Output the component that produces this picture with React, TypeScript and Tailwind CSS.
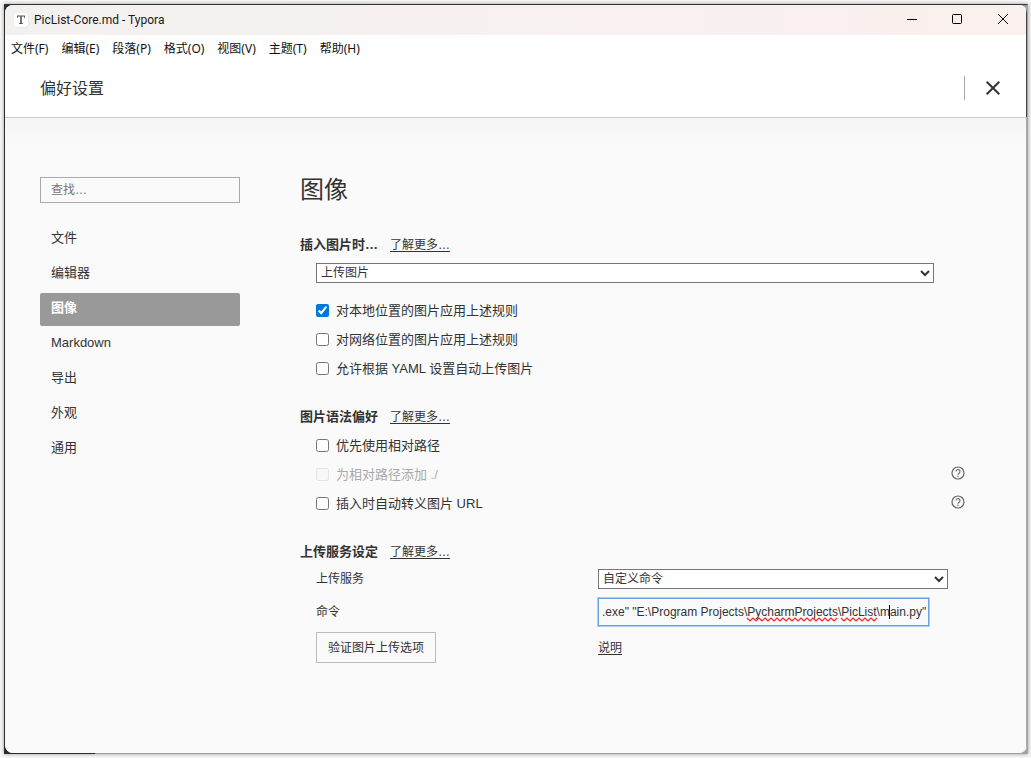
import { useState } from "react";
import type { ReactNode } from "react";

const menus = ["文件(F)", "编辑(E)", "段落(P)", "格式(O)", "视图(V)", "主题(T)", "帮助(H)"];
const categories = ["文件", "编辑器", "图像", "Markdown", "导出", "外观", "通用"];

function TitleBar() {
  return (
    <div className="flex h-[30px] items-center bg-linear-to-r from-[#f3f1f0] to-[#faf0ee] pl-2">
      <svg className="size-4" viewBox="0 0 16 16" aria-hidden="true">
        <rect x="1" y="1" width="14.500" height="14.500" rx="3" fill="#e4e2e1" />
        <rect x="1" y="1" width="14" height="14" rx="3" fill="#fff" />
        <path d="M4 3.500h8v2.500h-.6L10.900 4.500H8.800v6.500l1.200.3v.7H6v-.7l1.200-.3V4.500H5.100l-.5 1.500H4z" fill="#555" />
      </svg>
      <h1 className="ml-[5px] flex-1 font-[Roboto,'Noto_Sans_CJK_SC',sans-serif] text-xs text-[#1a1a1a]">
        PicList-Core.md - Typora
      </h1>
      <button type="button" aria-label="最小化" className="flex h-full w-[45px] items-center justify-center">
        <svg className="size-3" viewBox="0 0 12 12" stroke="#000" fill="none">
          <path d="M1 5.5h10" />
        </svg>
      </button>
      <button type="button" aria-label="最大化" className="flex h-full w-[46px] items-center justify-center">
        <svg className="size-3" viewBox="0 0 12 12" stroke="#000" fill="none">
          <rect x="1.5" y="0.5" width="9" height="9" rx="1" />
        </svg>
      </button>
      <button type="button" aria-label="关闭窗口" className="flex h-full w-[46px] items-center justify-center">
        <svg className="size-3" viewBox="0 0 12 12" stroke="#000" fill="none">
          <path d="M1 0l10 10M11 0L1 10" />
        </svg>
      </button>
    </div>
  );
}

function MenuBar() {
  return (
    <nav className="flex h-[27px] items-center gap-[13px] bg-white pl-[6px]">
      {menus.map((m) => (
        <button type="button" key={m} className="text-xs whitespace-nowrap text-[#111]">
          {m}
        </button>
      ))}
    </nav>
  );
}

function Section({ title, children }: { title: string; children: ReactNode }) {
  return (
    <section className="mb-[19px]">
      <div className="flex h-[29px] items-center gap-3">
        <h3 className="text-[13px] font-bold">{title}</h3>
        <a href="#more" className="text-xs underline underline-offset-2">
          了解更多…
        </a>
      </div>
      <div className="pl-4">{children}</div>
    </section>
  );
}

interface CheckRowProps {
  label: string;
  checked?: boolean;
  disabled?: boolean;
  help?: boolean;
}

function CheckRow({ label, checked = false, disabled = false, help = false }: CheckRowProps) {
  return (
    <div className="flex h-[29px] items-center justify-between">
      <label className={"flex items-center gap-[7px] text-[13px] " + (disabled ? "text-[#aaa]" : "")}>
        <input
          type="checkbox"
          defaultChecked={checked}
          disabled={disabled}
          className="size-[13px] accent-[#0078d7] disabled:opacity-50"
        />
        {label}
      </label>
      {help && (
        <button type="button" aria-label="帮助" className="mb-[3px]">
          <svg className="size-[14px]" viewBox="0 0 14 14" fill="none" stroke="#666">
            <circle cx="7" cy="7" r="6" strokeWidth="1.2" />
            <path d="M5 5.6a2 2 0 1 1 3.2 1.6C7.5 7.700 7 8 7 8.800" strokeWidth="1.1" />
            <path d="M7 9.800v1.100" strokeWidth="1.2" />
          </svg>
        </button>
      )}
    </div>
  );
}

function wave(from: number, to: number) {
  let d = `M${from} 1`;
  for (let x = from + 3, down = true; x <= to; x += 3, down = !down) d += `L${x} ${down ? 4 : 1}`;
  return d;
}

function CommandInput() {
  const [command, setCommand] = useState(
    '.exe" "E:\\Program Projects\\PycharmProjects\\PicList\\main.py"'
  );
  return (
    <div className="relative mr-[19px] h-7">
      <input
        id="command"
        type="text"
        spellCheck={false}
        value={command}
        onChange={(e) => setCommand(e.target.value)}
        className="h-7 w-full border border-[#6a9fe0] pl-[3px] text-xs ring-1 ring-[#a9cdf5] outline-none"
      />
      {/* spelling marks and caret */}
      <svg className="pointer-events-none absolute top-[19px] left-0 h-[5px] w-[290px]" viewBox="0 0 290 5" fill="none" stroke="#f22" strokeWidth="1.2">
        <path d={wave(149, 240)} />
        <path d={wave(243, 279)} />
      </svg>
      <span className="pointer-events-none absolute top-[7px] left-[291px] h-[14px] w-px bg-black" />
    </div>
  );
}

export default function App() {
  const [active, setActive] = useState("图像");

  return (
    <div className="flex min-h-screen bg-[#f8f8f8] pt-1 pr-[3px] pb-1 pl-1 font-['Liberation_Sans','Noto_Sans_CJK_SC',sans-serif] text-[#333]">
      <div className="flex flex-1 border-t border-r border-t-[#333] border-r-[#a5a5a5] bg-[linear-gradient(to_right,#2b2b2b_91px,#a0a0a0_91px)] pb-px pl-px shadow-[0_0_4px_rgba(0,0,0,0.4)]">
        <div className="flex flex-1 flex-col overflow-hidden rounded-lg bg-[#fafafa]">
          <div className="border-r border-[#444] font-['Noto_Sans','Noto_Sans_CJK_SC',sans-serif]">
            <TitleBar />
            <MenuBar />
            <header className="flex h-[55px] items-center bg-white pr-[26px] pb-[3px] pl-[35px]">
              <h2 className="flex-1 text-base">偏好设置</h2>
              <div className="h-6 w-px bg-[#aaa]" />
              <button type="button" aria-label="关闭" className="ml-[21px]">
                <svg className="size-[14px]" viewBox="0 0 14 14" stroke="#333" strokeWidth="2" fill="none">
                  <path d="M.7.7l12.600 12.600M13.300.7L.7 13.300" />
                </svg>
              </button>
            </header>
          </div>

          <div className="flex flex-1 items-start border-t border-r border-t-[#ccc] border-r-[#aaa] bg-[linear-gradient(to_bottom,#f5f5f5,#fafafa_24px)] pr-[61px] pl-[35px]">
            <aside className="w-[200px] shrink-0 pt-[59px]">
              <input
                type="search"
                aria-label="查找"
                placeholder="查找…"
                className="block h-[26px] w-full border border-[#aaa] px-[10px] text-xs placeholder:text-[#777]"
              />
              <ul className="mt-5 flex flex-col gap-[2px]">
                {categories.map((c) => (
                  <li key={c}>
                    <button
                      type="button"
                      onClick={() => setActive(c)}
                      className={
                        "flex h-[33px] w-full items-center rounded-xs pb-[3px] pl-[11px] text-[13px] " +
                        (c === active ? "bg-[#999] font-bold text-white" : "")
                      }
                    >
                      {c}
                    </button>
                  </li>
                ))}
              </ul>
            </aside>

            <main className="ml-[60px] min-w-0 flex-1 pt-[54px] pb-[70px]">
              <h2 className="mb-[22px] h-9 text-2xl leading-9">图像</h2>

              <Section title="插入图片时…">
                <div className="mt-1 mr-[31px] mb-[13px]">
                  <select aria-label="插入图片时" className="block h-5 w-full border border-[#767676] bg-white text-xs">
                    <option>上传图片</option>
                  </select>
                </div>
                <CheckRow label="对本地位置的图片应用上述规则" checked />
                <CheckRow label="对网络位置的图片应用上述规则" />
                <CheckRow label="允许根据 YAML 设置自动上传图片" />
              </Section>

              <Section title="图片语法偏好">
                <CheckRow label="优先使用相对路径" />
                <CheckRow label="为相对路径添加 ./" disabled help />
                <CheckRow label="插入时自动转义图片 URL" help />
              </Section>

              <Section title="上传服务设定">
                <div className="mt-[3px] mr-[17px] grid grid-cols-[282px_1fr] items-center text-xs">
                  <label htmlFor="service">上传服务</label>
                  <select id="service" className="h-5 border border-[#767676] bg-white">
                    <option>自定义命令</option>
                  </select>
                  <label htmlFor="command" className="mt-[9px]">
                    命令
                  </label>
                  <div className="mt-[9px]">
                    <CommandInput />
                  </div>
                  <button type="button" className="mt-[6px] h-[31px] w-[120px] border border-[#bbb]">
                    验证图片上传选项
                  </button>
                  <a href="#help" className="mt-[6px] justify-self-start underline underline-offset-2">
                    说明
                  </a>
                </div>
              </Section>
            </main>
          </div>
        </div>
      </div>
    </div>
  );
}
